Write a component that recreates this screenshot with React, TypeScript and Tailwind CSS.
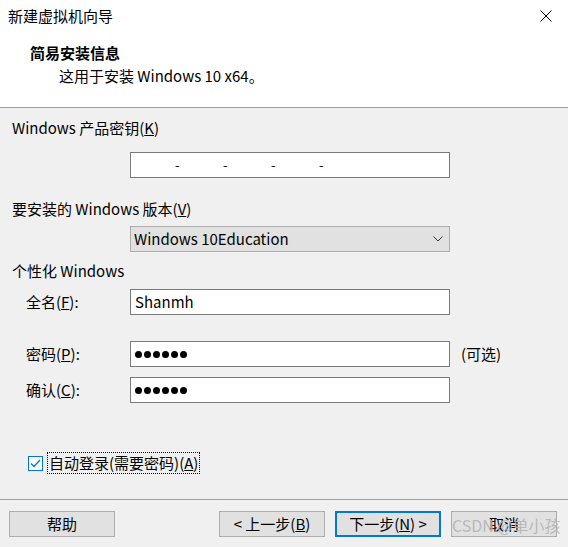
import React from "react";

const font = "font-['Noto_Sans_CJK_SC','Liberation_Sans',sans-serif]";

const Dots = () => (
    <div className="flex items-center gap-[2px] pl-[4px]">
        {[0, 1, 2, 3, 4, 5].map((i) => (
            <span key={i} className="block w-[7px] h-[7px] rounded-full bg-black" />
        ))}
    </div>
);

const Field: React.FC<{ label: React.ReactNode; children?: React.ReactNode; extra?: React.ReactNode; className?: string }> = ({ label, children, extra, className }) => (
    <div className={`flex items-center h-[26px] ${className ?? ""}`}>
        <div className="w-[118px] pl-[14px] leading-[20px]">{label}</div>
        <div className="w-[320px] h-[26px] bg-white border border-[#7a7a7a] flex items-center">{children}</div>
        {extra && <div className="ml-[11px] leading-[20px]">{extra}</div>}
    </div>
);

const Btn: React.FC<{ children: React.ReactNode; primary?: boolean }> = ({ children, primary }) => (
    <button
        className={`w-[106px] h-[26px] bg-[#e1e1e1] flex items-center justify-center leading-[20px] ${
            primary ? "border-2 border-[#0078d7]" : "border border-[#adadad]"
        }`}
    >
        {children}
    </button>
);

export default function App() {
    return (
        <div className={`w-[568px] h-[547px] bg-[#f0f0f0] flex flex-col text-[15px] text-black ${font}`}>
            {/* header */}
            <div className="bg-white h-[108px] border-b border-[#a0a0a0]">
                <div className="h-[32px] flex items-center justify-between pl-[8px] pr-[16px]">
                    <span className="leading-[20px]">新建虚拟机向导</span>
                    <svg width="12" height="12" viewBox="0 0 12 12">
                        <path d="M0.5 0.5 L11.5 11.5 M11.5 0.5 L0.5 11.5" stroke="#000" strokeWidth="1" />
                    </svg>
                </div>
                <div className="mt-[11px] pl-[30px] font-bold leading-[20px]">简易安装信息</div>
                <div className="mt-[3px] pl-[59px] leading-[20px]">这用于安装 Windows 10 x64。</div>
            </div>

            {/* body */}
            <div className="flex-1 flex flex-col pl-[12px]">
                <div className="mt-[10px] leading-[20px]">
                    Windows 产品密钥(<span className="underline">K</span>)
                </div>
                <div className="mt-[14px] ml-[118px] w-[320px] h-[26px] bg-white border border-[#7a7a7a] flex items-center">
                    <div className="flex pl-[44px] gap-[40px] text-[13px] leading-[16px]">
                        <span className="w-[8px]">-</span>
                        <span className="w-[8px]">-</span>
                        <span className="w-[8px]">-</span>
                        <span className="w-[8px]">-</span>
                    </div>
                </div>

                <div className="mt-[21px] leading-[20px]">
                    要安装的 Windows 版本(<span className="underline">V</span>)
                </div>
                <div className="mt-[7px] ml-[118px] w-[320px] h-[26px] bg-[#e1e1e1] border border-[#adadad] flex items-center justify-between pl-[3px] pr-[6px]">
                    <span className="leading-[20px]">Windows 10Education</span>
                    <svg width="10" height="6" viewBox="0 0 10 6">
                        <path d="M0.5 0.5 L5 5 L9.5 0.5" stroke="#333" strokeWidth="1" fill="none" />
                    </svg>
                </div>

                <div className="mt-[9px] leading-[20px]">个性化 Windows</div>
                <Field className="mt-[8px]" label={<>全名(<span className="underline">F</span>):</>}>
                    <span className="pl-[4px] leading-[20px]">Shanmh</span>
                </Field>
                <Field className="mt-[26px]" label={<>密码(<span className="underline">P</span>):</>} extra="(可选)">
                    <Dots />
                </Field>
                <Field className="mt-[10px]" label={<>确认(<span className="underline">C</span>):</>}>
                    <Dots />
                </Field>

                <div className="mt-[49px] ml-[16px] flex items-center h-[22px]">
                    <div className="w-[15px] h-[15px] bg-white border border-[#0078d7] flex items-center justify-center">
                        <svg width="11" height="9" viewBox="0 0 11 9">
                            <path d="M1 4.5 L4 7.5 L10 1" stroke="#0078d7" strokeWidth="1.3" fill="none" />
                        </svg>
                    </div>
                    <div className="ml-[4px] px-[1px] border border-dotted border-black leading-[20px]">
                        自动登录(需要密码)(<span className="underline">A</span>)
                    </div>
                </div>
            </div>

            {/* footer */}
            <div className="h-[48px] border-t border-[#a0a0a0] flex items-start pt-[11px] pl-[9px] pr-[11px]">
                <Btn>帮助</Btn>
                <div className="flex-1" />
                <div className="flex gap-[10px]">
                    <Btn>&lt; 上一步(<span className="underline">B</span>)</Btn>
                    <Btn primary>下一步(<span className="underline">N</span>) &gt;</Btn>
                    <div className="relative">
                        <Btn>取消</Btn>
                        <span className="absolute left-[1px] top-[4px] text-[16px] leading-[20px] text-[#b4b4b4]/90 pointer-events-none whitespace-nowrap">
                            CSDN @单小孩
                        </span>
                    </div>
                </div>
            </div>
        </div>
    );
}
